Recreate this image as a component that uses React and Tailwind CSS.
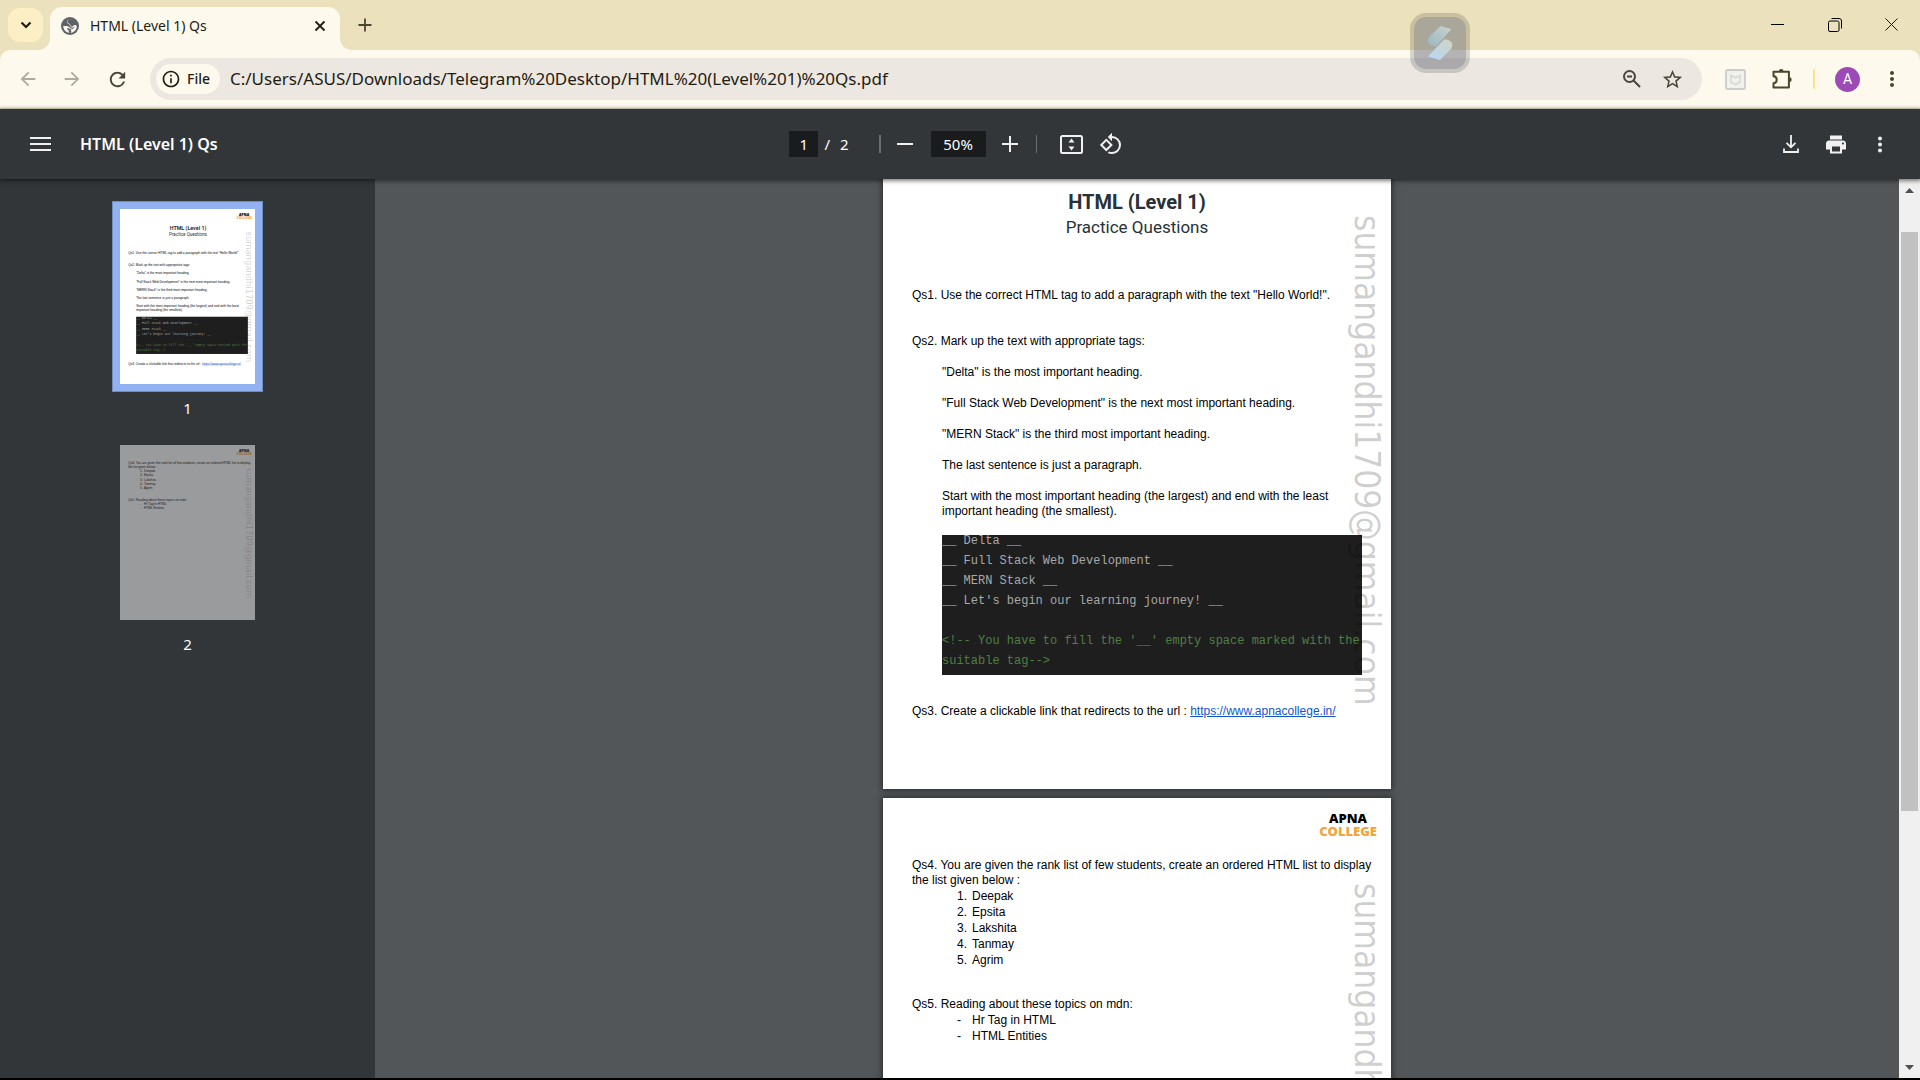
import React from "react";
import {
  MdArrowBack,
  MdArrowForward,
  MdRefresh,
  MdInfoOutline,
  MdStarBorder,
  MdMoreVert,
  MdPrint,
  MdRotate90DegreesCcw,
} from "react-icons/md";

const ui = "font-['Noto_Sans','Segoe_UI',sans-serif]";

function IconButton({ label, className = "", children }) {
  return (
    <button type="button" aria-label={label} className={`flex shrink-0 items-center justify-center ${className}`}>
      {children}
    </button>
  );
}

function TabStrip() {
  return (
    <header className="flex h-[50px] shrink-0 items-end bg-[#ebe1bd] pl-2">
      <IconButton label="Search tabs" className="mb-2 h-[34px] w-[35px] rounded-xl bg-[#fdefc5]">
        <svg width="12" height="8" viewBox="0 0 12 8" fill="none" stroke="#1f1c12" strokeWidth="2.2">
          <path d="M1.5 1.5 6 6l4.500-4.500" />
        </svg>
      </IconButton>
      <div className="relative ml-[7px] flex h-[43px] w-[290px] items-center rounded-t-xl bg-[#fef9ed] pb-1.5 pl-[11px] pr-3">
        <svg className="absolute -left-3 bottom-0" width="12" height="12" viewBox="0 0 12 12" fill="#fef9ed">
          <path d="M12 0v12H0C6.600 12 12 6.600 12 0Z" />
        </svg>
        <svg className="absolute -right-3 bottom-0" width="12" height="12" viewBox="0 0 12 12" fill="#fef9ed">
          <path d="M0 0v12h12C5.400 12 0 6.600 0 0Z" />
        </svg>
        <svg width="18" height="18" viewBox="0 0 18 18">
          <circle cx="9" cy="9" r="9" fill="#5f6368" />
          <path
            d="M11 2.200C8.500 2 6.300 3.300 6.300 5c0 1.500 2.200 1.200 2.800 2.400.5 1 .6 2.200 2 2.200 1.300 0 1.300-1.500 2.600-1.500 1 0 1.800.4 2.100 1.300-.3 3.400-2.800 6-6 6.400.9-1.100.6-2.200-.3-2.700L11.800 12 9 11.200C8.200 9.500 6.500 9 2.200 9.100 2.300 12.800 5 15.700 8.600 15.900c-.8-.8-1.200-1.800-.9-2.700-1-.2-1.700-.9-1.700-2 1.700-.2 3 .4 4.200 1.300 1.300-.2 3.300-1.500 3.500-3.200-.6 1.300-2.700 2-3.700 1-.9-.9-.9-2-1.600-2.800-.9-.9-2.600-.9-2.500-2.700.1-1.400 1.800-2.300 3.600-2.300Z"
            fill="#fef9ed"
          />
        </svg>
        <span className={`ml-[11px] flex-1 text-[14px] leading-5 text-[#1f1c12] ${ui}`}>HTML (Level 1) Qs</span>
        <IconButton label="Close tab" className="h-4 w-4">
          <svg width="12" height="12" viewBox="0 0 12 12" stroke="#1f1c12" strokeWidth="1.800">
            <path d="m1.500 1.500 9 9m0-9-9 9" />
          </svg>
        </IconButton>
      </div>
      <IconButton label="New tab" className="mb-2.5 ml-4 h-[30px] w-[18px]">
        <svg width="14" height="14" viewBox="0 0 14 14" stroke="#4a4530" strokeWidth="1.800">
          <path d="M7 .5v13M.5 7h13" />
        </svg>
      </IconButton>
      <div className="ml-auto flex h-full">
        <IconButton label="Minimize" className="h-[49px] w-[57px]">
          <svg width="13" height="13" viewBox="0 0 13 13" stroke="#000" fill="none">
            <path d="M0 6.500h13" />
          </svg>
        </IconButton>
        <IconButton label="Restore" className="h-[49px] w-[57px]">
          <svg width="14" height="14" viewBox="0 0 14 14" stroke="#000" fill="none">
            <rect x=".5" y="3" width="10.500" height="10.500" rx="1.500" />
            <path d="M3.500.500H11A2.500 2.500 0 0 1 13.500 3v7.500" />
          </svg>
        </IconButton>
        <IconButton label="Close" className="h-[49px] w-[57px]">
          <svg width="13" height="13" viewBox="0 0 13 13" stroke="#1a1a1a" fill="none">
            <path d="m.5.5 12 12m0-12-12 12" />
          </svg>
        </IconButton>
      </div>
    </header>
  );
}

function AddressBar() {
  return (
    <div className="shrink-0 bg-[#ebe1bd]">
      <nav aria-label="Browser" className="flex h-[59px] items-center rounded-t-[10px] border-b border-[#e3e3cb] bg-[#fef9ed] pr-4">
        <IconButton label="Back" className="ml-[17px] h-9 w-[22px]">
          <MdArrowBack size={22} color="#b0ab9d" />
        </IconButton>
        <IconButton label="Forward" className="ml-[22px] h-9 w-[22px]">
          <MdArrowForward size={22} color="#b0ab9d" />
        </IconButton>
        <IconButton label="Reload" className="ml-[23px] h-9 w-[23px]">
          <MdRefresh size={23} color="#4a4530" />
        </IconButton>
        <div className="ml-[21px] flex h-[42px] flex-1 items-center rounded-full bg-[#ece7e1] pl-1.5 pr-[18px]">
          <button type="button" className={`flex h-[30px] shrink-0 items-center gap-1.5 rounded-full bg-[#fef9ed] pl-[5px] pr-2.5 text-[14px] font-medium leading-5 text-[#1f1c12] ${ui}`}>
            <MdInfoOutline size={20} />
            File
          </button>
          <input
            type="text"
            aria-label="Address"
            defaultValue="C:/Users/ASUS/Downloads/Telegram%20Desktop/HTML%20(Level%201)%20Qs.pdf"
            className={`ml-2.5 min-w-0 flex-1 bg-transparent text-[17px] leading-6 text-[#1f1c12] outline-none ${ui}`}
          />
          <IconButton label="Zoom" className="h-6 w-6">
            <svg width="20" height="20" viewBox="0 0 20 20" fill="none" stroke="#4a463b" strokeWidth="2">
              <circle cx="7.500" cy="7.500" r="5.500" />
              <path d="m11.500 11.500 6.500 6.500M5 7.500h5" />
            </svg>
          </IconButton>
          <IconButton label="Bookmark" className="ml-4 h-6 w-6">
            <MdStarBorder size={23} color="#4a463b" />
          </IconButton>
        </div>
        <IconButton label="Security extension" className="ml-[23px] h-[21px] w-[21px]">
          <svg width="21" height="21" viewBox="0 0 21 21" fill="none" stroke="#c9cdcc">
            <rect x="1" y="1" width="19" height="19" rx="1.500" strokeWidth="1.800" fill="#f1f2ec" />
            <path d="M6 6.500v6.700l4.500 2.300 4.500-2.300V6.500l-4.500 2.200L6 6.500Z" strokeWidth="1.600" stroke="#d4d8d8" />
          </svg>
        </IconButton>
        <IconButton label="Extensions" className="ml-[25px] h-[22px] w-[22px]">
          <svg width="22" height="22" viewBox="0 0 22 22">
            <path d="M2.500 3.800h15.400v15.600H2.500v-4.200c2 0 3.200-1.500 3.200-3.400S4.500 8.200 2.500 8.200V3.800Z" fill="none" stroke="#4a4628" strokeWidth="2" strokeLinejoin="round" />
            <path d="M7.900 3.200a2.300 2.300 0 0 1 4.600 0ZM18.300 9.300a2.400 2.400 0 0 1 0 4.800Z" fill="#4a4628" />
          </svg>
        </IconButton>
        <span className="ml-5 h-5 w-0.5 rounded-full bg-[#fbe38c]" />
        <button type="button" aria-label="Profile A" className="ml-5 flex h-[25px] w-[25px] shrink-0 items-center justify-center rounded-full bg-[#9c4ab5] font-['Roboto',sans-serif] text-[14px] leading-4 text-white">
          A
        </button>
        <IconButton label="Menu" className="ml-5 h-6 w-6">
          <MdMoreVert size={26} color="#4a4628" />
        </IconButton>
      </nav>
    </div>
  );
}

function ViewerBar() {
  return (
    <div className={`relative z-10 grid h-[70px] shrink-0 grid-cols-[1fr_auto_1fr] items-center bg-[#323639] text-[#f1f1f1] shadow-[0_1px_4px_1px_rgba(0,0,0,0.5)] ${ui}`}>
      <div className="flex items-center pl-[30px]">
        <IconButton label="Toggle sidebar" className="h-5 w-[21px] flex-col gap-1">
          <span className="h-0.5 w-full bg-[#f1f1f1]" />
          <span className="h-0.5 w-full bg-[#f1f1f1]" />
          <span className="h-0.5 w-full bg-[#f1f1f1]" />
        </IconButton>
        <h1 className="ml-[29px] text-[16px] font-semibold leading-6 text-white">HTML (Level 1) Qs</h1>
      </div>
      <div className="flex items-center pr-2 text-[15px] leading-6 text-white">
        <input type="text" aria-label="Page number" defaultValue="1" className="h-[26px] w-[29px] bg-[#191b1c] text-center" />
        <span className="ml-1.5">/</span>
        <span className="ml-2.5">2</span>
        <span className="ml-[30px] h-[18px] w-0.5 bg-[#6b6e70]" />
        <IconButton label="Zoom out" className="ml-4 h-6 w-4">
          <svg width="16" height="16" viewBox="0 0 16 16" stroke="#f1f1f1" strokeWidth="2">
            <path d="M0 8h16" />
          </svg>
        </IconButton>
        <input type="text" aria-label="Zoom level" defaultValue="50%" className="ml-[18px] h-[26px] w-[55px] bg-[#191b1c] text-center" />
        <IconButton label="Zoom in" className="ml-4 h-6 w-4">
          <svg width="16" height="16" viewBox="0 0 16 16" stroke="#f1f1f1" strokeWidth="2">
            <path d="M0 8h16M8 0v16" />
          </svg>
        </IconButton>
        <span className="ml-[18px] h-[18px] w-px bg-[#6b6e70]" />
        <IconButton label="Fit to page" className="ml-[23px] h-6 w-[23px]">
          <svg width="23" height="19" viewBox="0 0 23 19" fill="#f1f1f1">
            <rect x="1" y="1" width="21" height="17" rx="1.500" fill="none" stroke="#f1f1f1" strokeWidth="2" />
            <path d="M11.500 3.500 14.500 7.500h-6ZM11.500 15.500l3-4h-6Z" />
          </svg>
        </IconButton>
        <IconButton label="Rotate counterclockwise" className="ml-4 h-6 w-6">
          <MdRotate90DegreesCcw size={24} color="#f1f1f1" />
        </IconButton>
      </div>
      <div className="flex items-center justify-end pr-7">
        <IconButton label="Download" className="h-6 w-4">
          <svg width="16" height="18" viewBox="0 0 16 18" fill="none" stroke="#f1f1f1" strokeWidth="1.800">
            <path d="M8 0v12M3.500 7.800 8 12.300l4.500-4.500M1 13.500V17h14v-3.500" />
          </svg>
        </IconButton>
        <IconButton label="Print" className="ml-[25px] h-6 w-6">
          <MdPrint size={25} color="#f1f1f1" />
        </IconButton>
        <IconButton label="More actions" className="ml-5 h-6 w-6">
          <MdMoreVert size={25} color="#f1f1f1" />
        </IconButton>
      </div>
    </div>
  );
}

function Logo() {
  return (
    <div className="absolute right-3.5 top-[14px] text-center font-['Open_Sans',sans-serif] text-[13px] font-extrabold leading-[13px]">
      <div className="text-black">APNA</div>
      <div className="text-[#f0a63c]">COLLEGE</div>
    </div>
  );
}

function Sheet({ children }) {
  return (
    <article className="relative h-[659px] w-[508px] shrink-0 bg-white px-[29px] font-['Liberation_Sans',Arial,sans-serif] text-[12px] leading-[15px] text-black">
      {children}
      <Logo />
      <div className="absolute right-[3px] top-[85px] whitespace-nowrap font-['DejaVu_Sans_Condensed','DejaVu_Sans',sans-serif] text-[35px] leading-[42px] text-black/20 [writing-mode:vertical-rl]">
        sumangandhi1709@gmail.com
      </div>
    </article>
  );
}

const hints = [
  '"Delta" is the most important heading.',
  '"Full Stack Web Development" is the next most important heading.',
  '"MERN Stack" is the third most important heading.',
  "The last sentence is just a paragraph.",
];

function PageOne({ preview = false }) {
  const url = "https://www.apnacollege.in/";
  const link = "text-[#1155cc] underline";
  return (
    <Sheet>
      <div className="pt-[59px] text-center font-['Roboto',sans-serif] text-[#263238]">
        <h2 className="text-[20px] font-bold leading-[26px]">HTML (Level 1)</h2>
        <p className="text-[17px] leading-6">Practice Questions</p>
      </div>
      <p className="mt-[49px]">Qs1. Use the correct HTML tag to add a paragraph with the text "Hello World!".</p>
      <p className="mt-[31px]">Qs2. Mark up the text with appropriate tags:</p>
      <div className="ml-[30px]">
        {hints.map((hint) => (
          <p key={hint} className="mt-4">
            {hint}
          </p>
        ))}
        <p className="mt-4">
          Start with the most important heading (the largest) and end with the least
          <br />
          important heading (the smallest).
        </p>
        <div className="mt-4 flex bg-[#1e1e1e] pb-1">
          <pre className="-mt-1 flex-1 whitespace-pre-wrap font-['Liberation_Mono',monospace] text-[12px] leading-5 text-[#a8a8a8]">
            {"__ Delta __\n__ Full Stack Web Development __\n__ MERN Stack __\n__ Let's begin our learning journey! __\n\n"}
            <span className="text-[#4f7f43]">{"<!-- You have to fill the '__' empty space marked with the suitable tag-->"}</span>
          </pre>
        </div>
      </div>
      <p className="mt-[29px]">
        Qs3. Create a clickable link that redirects to the url :{" "}
        {preview ? (
          <span className={link}>{url}</span>
        ) : (
          <a href={url} className={link}>
            {url}
          </a>
        )}
      </p>
    </Sheet>
  );
}

function PageTwo() {
  const students = ["Deepak", "Epsita", "Lakshita", "Tanmay", "Agrim"];
  const topics = ["Hr Tag in HTML", "HTML Entities"];
  return (
    <Sheet>
      <p className="whitespace-nowrap pt-[60px]">
        Qs4. You are given the rank list of few students, create an ordered HTML list to display
        <br />
        the list given below :
      </p>
      <ol className="ml-[45px] leading-4">
        {students.map((name, i) => (
          <li key={name} className="flex">
            <span className="w-[15px]">{i + 1}.</span>
            {name}
          </li>
        ))}
      </ol>
      <p className="mt-[29px]">Qs5. Reading about these topics on mdn:</p>
      <ul className="ml-[45px] leading-4">
        {topics.map((topic) => (
          <li key={topic} className="flex">
            <span className="w-[15px]">-</span>
            {topic}
          </li>
        ))}
      </ul>
    </Sheet>
  );
}

function Thumbnail({ number, selected, children }) {
  return (
    <button type="button" aria-label={`Page ${number}`} className="flex flex-col items-center">
      <span className={selected ? "border-8 border-[#92b1f1] outline outline-1 -outline-offset-1 outline-[#6f8cc0]" : "border-8 border-transparent"}>
        <span className={selected ? "block bg-white" : "block bg-white opacity-50"}>
          <span className="flex h-[175px] w-[135px] justify-center overflow-hidden text-left">
            <span className="block shrink-0 origin-top scale-[0.266]">{children}</span>
          </span>
        </span>
      </span>
      <span className={`mt-1 text-[15px] leading-6 text-white ${ui}`}>{number}</span>
    </button>
  );
}

function Scrollbar() {
  return (
    <div aria-hidden="true" className="flex w-[21px] shrink-0 flex-col items-center justify-between bg-[#f0f0f0] pb-2 pt-[9px]">
      <svg width="9" height="5" viewBox="0 0 9 5" fill="#505050">
        <path d="M4.500 0 9 5H0Z" />
      </svg>
      <span className="mb-[232px] mt-[39px] w-[17px] flex-1 bg-[#c1c1c1]" />
      <svg className="mt-[22px]" width="9" height="5" viewBox="0 0 9 5" fill="#505050">
        <path d="M4.500 5 9 0H0Z" />
      </svg>
    </div>
  );
}

function FloatingLauncher() {
  return (
    <button type="button" aria-label="Assistant" className="absolute left-[73%] top-[13px] z-20 ml-2 flex h-[60px] w-[60px] items-center justify-center rounded-2xl border-4 border-black/15 bg-[#696c78]/50 bg-clip-padding">
      <svg width="26" height="36" viewBox="0 0 26 36">
        <defs>
          <linearGradient id="upper" x1="0" y1="1" x2="1" y2="0">
            <stop offset="0" stopColor="#98b8c2" />
            <stop offset="1" stopColor="#c9d3cd" />
          </linearGradient>
          <linearGradient id="lower" x1="0" y1="1" x2="1" y2="0">
            <stop offset="0" stopColor="#b9d6fa" />
            <stop offset="1" stopColor="#ced6c0" />
          </linearGradient>
        </defs>
        <path d="M13.500 1 24.500 4 9 21.500C3 21.500-1 17 2 12Z" fill="url(#upper)" />
        <path d="M17 14.500C24 14 27.500 19 24 24L13 35 1 31.500Z" fill="url(#lower)" />
      </svg>
    </button>
  );
}

export default function App() {
  return (
    <div className="relative flex h-screen flex-col overflow-hidden border-b-2 border-black bg-[#525659]">
      <TabStrip />
      <AddressBar />
      <ViewerBar />
      <div className="flex min-h-0 flex-1">
        <aside aria-label="Thumbnails" className="flex w-[375px] shrink-0 flex-col items-center gap-[17px] overflow-hidden bg-[#323639] pt-[22px]">
          <Thumbnail number={1} selected>
            <PageOne preview />
          </Thumbnail>
          <Thumbnail number={2}>
            <PageTwo />
          </Thumbnail>
        </aside>
        <main className="flex flex-1 flex-col items-center overflow-hidden">
          <div className="-mt-[49px] flex flex-col gap-[9px]">
            <div className="shadow-[0_0_6px_1px_rgba(0,0,0,0.5)]">
              <PageOne />
            </div>
            <div className="shadow-[0_0_6px_1px_rgba(0,0,0,0.5)]">
              <PageTwo />
            </div>
          </div>
        </main>
        <Scrollbar />
      </div>
      <FloatingLauncher />
    </div>
  );
}
